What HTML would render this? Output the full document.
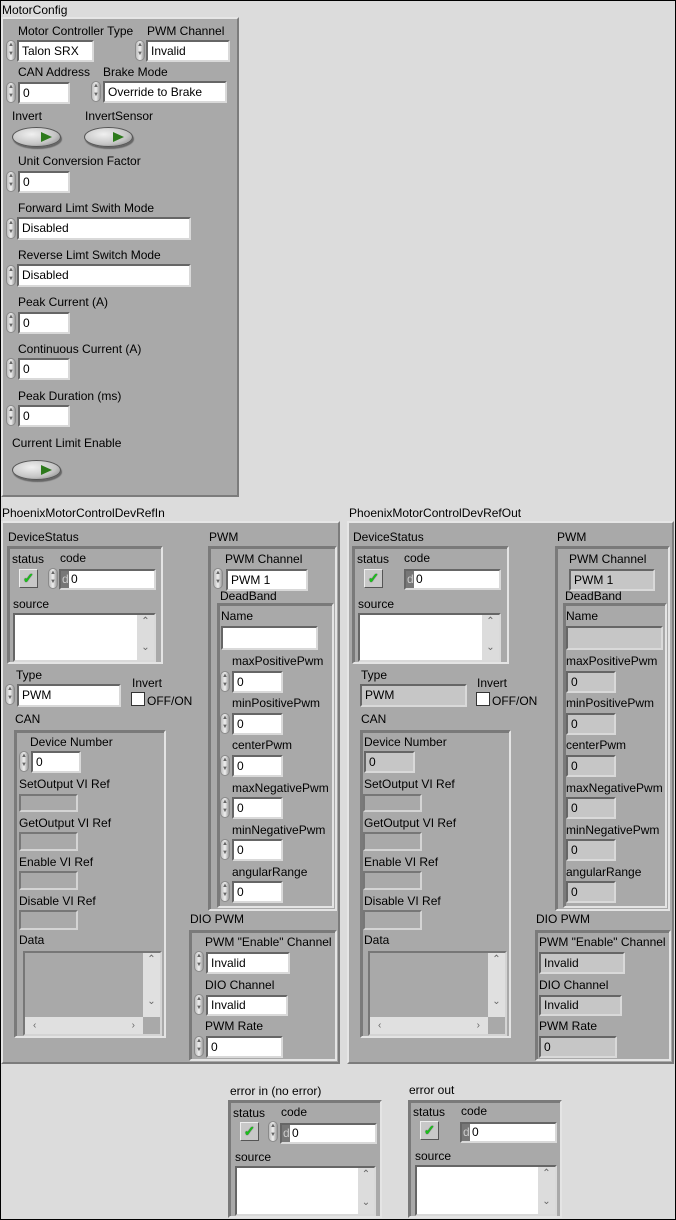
<!DOCTYPE html>
<html><head><meta charset="utf-8">
<style>
*{box-sizing:border-box;margin:0;padding:0}
body{width:676px;height:1220px;position:relative;background:#dcdcdc;overflow:hidden;font-family:"Liberation Sans",sans-serif;font-size:12px;color:#000}
.frame{position:absolute;left:0;top:0;width:676px;height:1220px;border:1px solid #000;pointer-events:none;z-index:10}
.a{position:absolute}
.t{position:absolute;white-space:nowrap;line-height:14px;font-size:12px}
.c{position:absolute;background:#a9a9a9;border:2px solid;border-color:#7a7a7a #e4e4e4 #e4e4e4 #7a7a7a;box-shadow:1px 1px 0 #7a7a7a inset}
.o{position:absolute;background:#a9a9a9;border:2px solid;border-color:#e6e6e6 #7c7c7c #7c7c7c #e6e6e6}
.w,.g,.r{position:absolute;border:2px solid;border-color:#666 #d9d9d9 #d9d9d9 #666;padding-left:3px;white-space:nowrap;overflow:hidden}
.w{background:#fff}
.g{background:#c6c6c6}
.r{background:#a9a9a9;border-color:#777 #d4d4d4 #d4d4d4 #777}
.i{position:absolute;width:10px;height:21px;border-radius:5px;background:linear-gradient(90deg,#bdbdbd,#eee 50%,#9a9a9a);border:1px solid #8a8a8a;font-size:6px;line-height:9px;text-align:center;color:#666}
.led{position:absolute;width:19px;height:19px;background:#c8c8c8;border:1px solid;border-color:#eee #555 #555 #eee;text-align:center;line-height:17px;font-size:14px;color:#19c219;font-weight:bold;text-shadow:0 0 1px #000}
.tg{position:absolute;width:49px;height:20px;border-radius:50%;background:radial-gradient(ellipse at 40% 35%,#f0f0f0,#c4c4c4 60%,#777);border:1px solid #555;box-shadow:1px 2px 1px #666}
.tg:after{content:"";position:absolute;left:28px;top:4px;border-left:11px solid #2d7a1c;border-top:5px solid transparent;border-bottom:5px solid transparent}
.d{position:absolute;background:#777;color:#ccc;width:8px;top:0;bottom:0;left:0;padding-left:1px}
.sb{position:absolute;background:#dcdcdc;color:#666;font-size:10px;text-align:center}
.cb{position:absolute;width:14px;height:14px;background:#fff;border:1px solid #333}
</style></head><body>
<div class="frame"></div>

<!-- MotorConfig -->
<div class="t" style="left:2px;top:3px">MotorConfig</div>
<div class="o" style="left:1px;top:17px;width:238px;height:480px"></div>
<div class="t" style="left:18px;top:24px">Motor Controller Type</div>
<div class="i" style="left:6px;top:40px">▲<br>▼</div>
<div class="w" style="left:17px;top:40px;width:77px;height:22px;line-height:18px">Talon SRX</div>
<div class="t" style="left:147px;top:24px">PWM Channel</div>
<div class="i" style="left:135px;top:40px">▲<br>▼</div>
<div class="w" style="left:146px;top:40px;width:84px;height:22px;line-height:18px">Invalid</div>
<div class="t" style="left:18px;top:65px">CAN Address</div>
<div class="i" style="left:6px;top:82px">▲<br>▼</div>
<div class="w" style="left:18px;top:82px;width:52px;height:22px;line-height:18px">0</div>
<div class="t" style="left:103px;top:65px">Brake Mode</div>
<div class="i" style="left:91px;top:81px">▲<br>▼</div>
<div class="w" style="left:103px;top:81px;width:124px;height:22px;line-height:18px">Override to Brake</div>
<div class="t" style="left:12px;top:109px">Invert</div>
<div class="tg" style="left:12px;top:127px"></div>
<div class="t" style="left:85px;top:109px">InvertSensor</div>
<div class="tg" style="left:84px;top:127px"></div>
<div class="t" style="left:18px;top:154px">Unit Conversion Factor</div>
<div class="i" style="left:6px;top:171px">▲<br>▼</div>
<div class="w" style="left:18px;top:171px;width:52px;height:22px;line-height:18px">0</div>
<div class="t" style="left:18px;top:201px">Forward Limt Swith Mode</div>
<div class="i" style="left:6px;top:218px">▲<br>▼</div>
<div class="w" style="left:17px;top:217px;width:174px;height:23px;line-height:19px">Disabled</div>
<div class="t" style="left:18px;top:248px">Reverse Limt Switch Mode</div>
<div class="i" style="left:6px;top:265px">▲<br>▼</div>
<div class="w" style="left:17px;top:264px;width:174px;height:23px;line-height:19px">Disabled</div>
<div class="t" style="left:18px;top:295px">Peak Current (A)</div>
<div class="i" style="left:6px;top:312px">▲<br>▼</div>
<div class="w" style="left:18px;top:312px;width:52px;height:22px;line-height:18px">0</div>
<div class="t" style="left:18px;top:342px">Continuous Current (A)</div>
<div class="i" style="left:6px;top:358px">▲<br>▼</div>
<div class="w" style="left:18px;top:358px;width:52px;height:22px;line-height:18px">0</div>
<div class="t" style="left:18px;top:389px">Peak Duration (ms)</div>
<div class="i" style="left:6px;top:405px">▲<br>▼</div>
<div class="w" style="left:18px;top:405px;width:52px;height:22px;line-height:18px">0</div>
<div class="t" style="left:12px;top:436px">Current Limit Enable</div>
<div class="tg" style="left:12px;top:460px"></div>

<!-- Left DevRefIn -->
<div class="t" style="left:2px;top:506px">PhoenixMotorControlDevRefIn</div>
<div class="o" style="left:1px;top:521px;width:339px;height:543px"></div>
<div class="t" style="left:8px;top:530px">DeviceStatus</div>
<div class="c" style="left:7px;top:546px;width:156px;height:118px"></div>
<div class="t" style="left:12px;top:552px">status</div>
<div class="led" style="left:19px;top:569px">✓</div>
<div class="t" style="left:60px;top:551px">code</div>
<div class="i" style="left:48px;top:568px">▲<br>▼</div>
<div class="w" style="left:59px;top:569px;width:97px;height:21px;line-height:17px;padding-left:10px"><span class="d">d</span>0</div>
<div class="t" style="left:13px;top:597px">source</div>
<div class="w" style="left:13px;top:613px;width:143px;height:49px"></div>
<div class="sb" style="left:137px;top:615px;width:17px;height:45px;line-height:13px">⌃<br><br>⌄</div>
<div class="t" style="left:16px;top:668px">Type</div>
<div class="i" style="left:5px;top:684px">▲<br>▼</div>
<div class="w" style="left:17px;top:684px;width:104px;height:23px;line-height:19px">PWM</div>
<div class="t" style="left:132px;top:676px">Invert</div>
<div class="cb" style="left:131px;top:692px"></div>
<div class="t" style="left:147px;top:694px">OFF/ON</div>
<div class="t" style="left:15px;top:712px">CAN</div>
<div class="c" style="left:14px;top:730px;width:152px;height:308px"></div>
<div class="t" style="left:30px;top:735px">Device Number</div>
<div class="i" style="left:19px;top:751px">▲<br>▼</div>
<div class="w" style="left:31px;top:751px;width:50px;height:22px;line-height:18px">0</div>
<div class="t" style="left:19px;top:777px">SetOutput VI Ref</div>
<div class="r" style="left:19px;top:794px;width:59px;height:18px"></div>
<div class="t" style="left:19px;top:816px">GetOutput VI Ref</div>
<div class="r" style="left:19px;top:832px;width:59px;height:19px"></div>
<div class="t" style="left:19px;top:855px">Enable VI Ref</div>
<div class="r" style="left:19px;top:871px;width:59px;height:19px"></div>
<div class="t" style="left:19px;top:894px">Disable VI Ref</div>
<div class="r" style="left:19px;top:910px;width:59px;height:20px"></div>
<div class="t" style="left:19px;top:933px">Data</div>
<div class="r" style="left:23px;top:951px;width:139px;height:85px"></div>
<div class="sb" style="left:143px;top:953px;width:17px;height:64px;line-height:14px;background:#e0e0e0">⌃<br><br><br>⌄</div>
<div class="sb" style="left:25px;top:1017px;width:118px;height:17px;line-height:17px;text-align:left;padding:0 8px;background:#e0e0e0">‹<span style="float:right">›</span></div>

<div class="t" style="left:209px;top:530px">PWM</div>
<div class="c" style="left:208px;top:546px;width:129px;height:365px"></div>
<div class="t" style="left:225px;top:552px">PWM Channel</div>
<div class="i" style="left:213px;top:568px">▲<br>▼</div>
<div class="w" style="left:226px;top:569px;width:82px;height:22px;line-height:18px">PWM 1</div>
<div class="t" style="left:220px;top:589px">DeadBand</div>
<div class="c" style="left:217px;top:603px;width:117px;height:305px"></div>
<div class="t" style="left:221px;top:609px">Name</div>
<div class="w" style="left:221px;top:626px;width:97px;height:24px"></div>
<div class="t" style="left:232px;top:654px">maxPositivePwm</div>
<div class="i" style="left:220px;top:671px">▲<br>▼</div>
<div class="w" style="left:232px;top:671px;width:51px;height:22px;line-height:18px">0</div>
<div class="t" style="left:232px;top:696px">minPositivePwm</div>
<div class="i" style="left:220px;top:713px">▲<br>▼</div>
<div class="w" style="left:232px;top:713px;width:51px;height:22px;line-height:18px">0</div>
<div class="t" style="left:232px;top:738px">centerPwm</div>
<div class="i" style="left:220px;top:755px">▲<br>▼</div>
<div class="w" style="left:232px;top:755px;width:51px;height:22px;line-height:18px">0</div>
<div class="t" style="left:232px;top:781px">maxNegativePwm</div>
<div class="i" style="left:220px;top:797px">▲<br>▼</div>
<div class="w" style="left:232px;top:797px;width:51px;height:22px;line-height:18px">0</div>
<div class="t" style="left:232px;top:823px">minNegativePwm</div>
<div class="i" style="left:220px;top:839px">▲<br>▼</div>
<div class="w" style="left:232px;top:839px;width:51px;height:22px;line-height:18px">0</div>
<div class="t" style="left:232px;top:865px">angularRange</div>
<div class="i" style="left:220px;top:881px">▲<br>▼</div>
<div class="w" style="left:232px;top:881px;width:51px;height:22px;line-height:18px">0</div>
<div class="t" style="left:190px;top:912px">DIO PWM</div>
<div class="c" style="left:189px;top:930px;width:148px;height:131px"></div>
<div class="t" style="left:205px;top:935px">PWM "Enable" Channel</div>
<div class="i" style="left:194px;top:951px">▲<br>▼</div>
<div class="w" style="left:206px;top:952px;width:84px;height:22px;line-height:18px">Invalid</div>
<div class="t" style="left:205px;top:978px">DIO Channel</div>
<div class="i" style="left:194px;top:994px">▲<br>▼</div>
<div class="w" style="left:206px;top:995px;width:82px;height:21px;line-height:17px">Invalid</div>
<div class="t" style="left:205px;top:1019px">PWM Rate</div>
<div class="i" style="left:194px;top:1036px">▲<br>▼</div>
<div class="w" style="left:206px;top:1036px;width:77px;height:22px;line-height:18px">0</div>

<!-- Right DevRefOut -->
<div class="t" style="left:349px;top:506px">PhoenixMotorControlDevRefOut</div>
<div class="o" style="left:347px;top:521px;width:327px;height:543px"></div>
<div class="t" style="left:353px;top:530px">DeviceStatus</div>
<div class="c" style="left:352px;top:546px;width:157px;height:118px"></div>
<div class="t" style="left:357px;top:552px">status</div>
<div class="led" style="left:364px;top:569px">✓</div>
<div class="t" style="left:404px;top:551px">code</div>
<div class="w" style="left:404px;top:569px;width:97px;height:21px;line-height:17px;padding-left:10px"><span class="d">d</span>0</div>
<div class="t" style="left:358px;top:597px">source</div>
<div class="w" style="left:358px;top:613px;width:143px;height:49px"></div>
<div class="sb" style="left:482px;top:615px;width:17px;height:45px;line-height:13px">⌃<br><br>⌄</div>
<div class="t" style="left:361px;top:668px">Type</div>
<div class="g" style="left:360px;top:684px;width:107px;height:23px;line-height:19px">PWM</div>
<div class="t" style="left:477px;top:676px">Invert</div>
<div class="cb" style="left:476px;top:692px"></div>
<div class="t" style="left:492px;top:694px">OFF/ON</div>
<div class="t" style="left:361px;top:712px">CAN</div>
<div class="c" style="left:360px;top:730px;width:151px;height:308px"></div>
<div class="t" style="left:364px;top:735px">Device Number</div>
<div class="g" style="left:364px;top:751px;width:51px;height:22px;line-height:18px">0</div>
<div class="t" style="left:364px;top:777px">SetOutput VI Ref</div>
<div class="r" style="left:363px;top:794px;width:59px;height:18px"></div>
<div class="t" style="left:364px;top:816px">GetOutput VI Ref</div>
<div class="r" style="left:363px;top:832px;width:59px;height:19px"></div>
<div class="t" style="left:364px;top:855px">Enable VI Ref</div>
<div class="r" style="left:363px;top:871px;width:59px;height:19px"></div>
<div class="t" style="left:364px;top:894px">Disable VI Ref</div>
<div class="r" style="left:363px;top:910px;width:59px;height:20px"></div>
<div class="t" style="left:364px;top:933px">Data</div>
<div class="r" style="left:368px;top:951px;width:139px;height:85px"></div>
<div class="sb" style="left:488px;top:953px;width:17px;height:64px;line-height:14px;background:#e0e0e0">⌃<br><br><br>⌄</div>
<div class="sb" style="left:370px;top:1017px;width:118px;height:17px;line-height:17px;text-align:left;padding:0 8px;background:#e0e0e0">‹<span style="float:right">›</span></div>

<div class="t" style="left:557px;top:530px">PWM</div>
<div class="c" style="left:555px;top:546px;width:115px;height:365px"></div>
<div class="t" style="left:569px;top:552px">PWM Channel</div>
<div class="g" style="left:569px;top:569px;width:86px;height:22px;line-height:18px">PWM 1</div>
<div class="t" style="left:565px;top:589px">DeadBand</div>
<div class="c" style="left:563px;top:603px;width:104px;height:305px"></div>
<div class="t" style="left:566px;top:609px">Name</div>
<div class="g" style="left:566px;top:626px;width:97px;height:24px"></div>
<div class="t" style="left:566px;top:654px">maxPositivePwm</div>
<div class="g" style="left:566px;top:671px;width:50px;height:22px;line-height:18px">0</div>
<div class="t" style="left:566px;top:696px">minPositivePwm</div>
<div class="g" style="left:566px;top:713px;width:50px;height:22px;line-height:18px">0</div>
<div class="t" style="left:566px;top:738px">centerPwm</div>
<div class="g" style="left:566px;top:755px;width:50px;height:22px;line-height:18px">0</div>
<div class="t" style="left:566px;top:781px">maxNegativePwm</div>
<div class="g" style="left:566px;top:797px;width:50px;height:22px;line-height:18px">0</div>
<div class="t" style="left:566px;top:823px">minNegativePwm</div>
<div class="g" style="left:566px;top:839px;width:50px;height:22px;line-height:18px">0</div>
<div class="t" style="left:566px;top:865px">angularRange</div>
<div class="g" style="left:566px;top:881px;width:50px;height:22px;line-height:18px">0</div>
<div class="t" style="left:536px;top:912px">DIO PWM</div>
<div class="c" style="left:535px;top:930px;width:136px;height:131px"></div>
<div class="t" style="left:539px;top:935px">PWM "Enable" Channel</div>
<div class="g" style="left:539px;top:952px;width:86px;height:22px;line-height:18px">Invalid</div>
<div class="t" style="left:539px;top:978px">DIO Channel</div>
<div class="g" style="left:539px;top:995px;width:83px;height:21px;line-height:17px">Invalid</div>
<div class="t" style="left:539px;top:1019px">PWM Rate</div>
<div class="g" style="left:539px;top:1036px;width:78px;height:22px;line-height:18px">0</div>

<!-- error in -->
<div class="t" style="left:230px;top:1084px">error in (no error)</div>
<div class="c" style="left:228px;top:1100px;width:154px;height:118px"></div>
<div class="t" style="left:233px;top:1106px">status</div>
<div class="led" style="left:240px;top:1122px">✓</div>
<div class="t" style="left:281px;top:1105px">code</div>
<div class="i" style="left:268px;top:1121px">▲<br>▼</div>
<div class="w" style="left:280px;top:1123px;width:97px;height:21px;line-height:17px;padding-left:10px"><span class="d">d</span>0</div>
<div class="t" style="left:235px;top:1150px">source</div>
<div class="w" style="left:235px;top:1166px;width:141px;height:50px"></div>
<div class="sb" style="left:358px;top:1168px;width:16px;height:46px;line-height:14px">⌃<br><br>⌄</div>

<!-- error out -->
<div class="t" style="left:409px;top:1083px">error out</div>
<div class="c" style="left:408px;top:1100px;width:154px;height:118px"></div>
<div class="t" style="left:413px;top:1105px">status</div>
<div class="led" style="left:420px;top:1121px">✓</div>
<div class="t" style="left:461px;top:1104px">code</div>
<div class="w" style="left:460px;top:1122px;width:97px;height:21px;line-height:17px;padding-left:10px"><span class="d">d</span>0</div>
<div class="t" style="left:415px;top:1149px">source</div>
<div class="w" style="left:415px;top:1165px;width:142px;height:51px"></div>
<div class="sb" style="left:538px;top:1167px;width:17px;height:47px;line-height:14px">⌃<br><br>⌄</div>

</body></html>
